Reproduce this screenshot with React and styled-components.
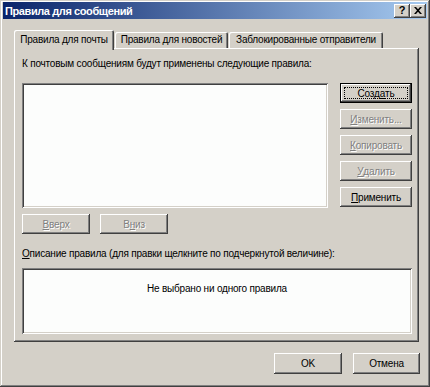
import React from "react";
import styled, { createGlobalStyle, css } from "styled-components";

const Global = createGlobalStyle`
  html, body { margin: 0; padding: 0; background: #d4d0c8; }
  body { font-family: "Liberation Sans", Arial, sans-serif; font-size: 10px; letter-spacing: -0.2px; color: #000; }
  * { box-sizing: border-box; }
`;

const bevelOut = css`
  box-shadow: inset -1px -1px #404040, inset 1px 1px #ffffff, inset -2px -2px #808080, inset 2px 2px #d4d0c8;
`;

const Window = styled.div`
  width: 430px;
  height: 387px;
  background: #d4d0c8;
  padding: 2px;
  display: flex;
  flex-direction: column;
  box-shadow: inset -1px -1px #404040, inset 1px 1px #d4d0c8, inset -2px -2px #808080, inset 2px 2px #ffffff;
`;

const TitleBar = styled.div`
  height: 17px;
  margin: 0 1px;
  display: flex;
  align-items: center;
  padding-left: 2px;
  background: linear-gradient(to right, #0a246a, #a6caf0);
`;

const Title = styled.span`
  flex: 1;
  color: #fff;
  font-weight: bold;
  font-size: 11px;
  letter-spacing: -0.4px;
`;

const TitleButton = styled.div`
  width: 16px;
  height: 14px;
  background: #d4d0c8;
  ${bevelOut};
  display: flex;
  align-items: center;
  justify-content: center;
  margin-right: ${(p) => (p.$last ? "1px" : "0")};
  font-weight: bold;
  font-size: 11px;
  letter-spacing: 0;
  line-height: 1;
  color: #000;
`;

const Body = styled.div`
  flex: 1;
  display: flex;
  flex-direction: column;
  padding: 10px 10px 0 12px;
`;

const TabRow = styled.div`
  display: flex;
  align-items: flex-end;
  height: 19px;
  position: relative;
  z-index: 1;
`;

const Tab = styled.div`
  width: ${(p) => p.$w}px;
  height: ${(p) => (p.$active ? "20px" : "16px")};
  margin-bottom: ${(p) => (p.$active ? "-2px" : "0")};
  padding-top: ${(p) => (p.$active ? "3px" : "1px")};
  margin-left: ${(p) => (p.$active ? "0" : "1px")};
  background: #d4d0c8;
  border-top-left-radius: 2px;
  border-top-right-radius: 2px;
  box-shadow: inset 1px 1px #ffffff, inset -1px 0 #404040, inset -2px 0 #808080;
  white-space: nowrap;
  text-align: center;
  line-height: 13px;
`;

const Panel = styled.div`
  width: 405px;
  height: 294px;
  background: #d4d0c8;
  box-shadow: inset -1px -1px #404040, inset 1px 1px #ffffff, inset -2px -2px #808080;
  padding: 9px 7px 0 8px;
  display: flex;
  flex-direction: column;
`;

const Label = styled.div`
  height: 13px;
  line-height: 13px;
  white-space: nowrap;
`;

const MainRow = styled.div`
  display: flex;
  gap: 12px;
  margin-top: 13px;
`;

const Sunken = styled.div`
  background: #fcfdfc;
  box-shadow: inset 1px 1px #808080, inset -1px -1px #ffffff, inset 2px 2px #404040, inset -2px -2px #d4d0c8;
  width: ${(p) => p.$w}px;
  height: ${(p) => p.$h}px;
  display: flex;
  align-items: flex-start;
  justify-content: center;
`;

const ButtonCol = styled.div`
  display: flex;
  flex-direction: column;
  gap: 6px;
`;

const Button = styled.div`
  width: ${(p) => p.$w || 72}px;
  height: ${(p) => p.$h || 20}px;
  background: #d4d0c8;
  display: flex;
  align-items: center;
  justify-content: center;
  position: relative;
  white-space: nowrap;
  ${bevelOut};
  color: ${(p) => (p.$disabled ? "#808080" : "#000")};
  text-shadow: ${(p) => (p.$disabled ? "1px 1px 0 #ffffff" : "none")};
  ${(p) =>
    p.$default &&
    css`
      box-shadow: inset 0 0 0 1px #000, inset -2px -2px #404040, inset 2px 2px #ffffff, inset -3px -3px #808080;
      &::after {
        content: "";
        position: absolute;
        left: 4px;
        top: 4px;
        right: 4px;
        bottom: 4px;
        border: 1px dotted #000;
      }
    `}
`;

const U = styled.span`
  text-decoration: underline;
  text-underline-offset: 1px;
`;

const MoveRow = styled.div`
  display: flex;
  gap: 10px;
  margin-top: 6px;
`;

const DescLabel = styled(Label)`
  margin-top: 13px;
`;

const DescBox = styled(Sunken)`
  margin-top: 8px;
  padding-top: 15px;
`;

const Footer = styled.div`
  display: flex;
  justify-content: flex-end;
  gap: 11px;
  margin-top: 11px;
  width: 406px;
`;

export default function App() {
  return (
    <>
      <Global />
      <Window>
        <TitleBar>
          <Title>Правила для сообщений</Title>
          <TitleButton>?</TitleButton>
          <TitleButton $last>
            <svg width="8" height="7" viewBox="0 0 8 7">
              <path d="M0 0h2l2 2.3L6 0h2L5 3.5 8 7H6L4 4.7 2 7H0l3-3.5z" fill="#000" />
            </svg>
          </TitleButton>
        </TitleBar>
        <Body>
          <TabRow>
            <Tab $active $w={100}>Правила для почты</Tab>
            <Tab $w={113}>Правила для новостей</Tab>
            <Tab $w={154}>Заблокированные отправители</Tab>
          </TabRow>
          <Panel>
            <Label>К почтовым сообщениям будут применены следующие правила:</Label>
            <MainRow>
              <Sunken $w={307} $h={125} />
              <ButtonCol>
                <Button $default>
                  Созд<U>а</U>ть
                </Button>
                <Button $disabled>
                  <U>И</U>зменить...
                </Button>
                <Button $disabled>
                  <U>К</U>опировать
                </Button>
                <Button $disabled>
                  <U>У</U>далить
                </Button>
                <Button>
                  <U>П</U>рименить
                </Button>
              </ButtonCol>
            </MainRow>
            <MoveRow>
              <Button $w={68} $disabled>
                <U>В</U>верх
              </Button>
              <Button $w={68} $disabled>
                В<U>н</U>из
              </Button>
            </MoveRow>
            <DescLabel>
              <U>О</U>писание правила (для правки щелкните по подчеркнутой величине):
            </DescLabel>
            <DescBox $w={390} $h={66}>
              Не выбрано ни одного правила
            </DescBox>
          </Panel>
          <Footer>
            <Button $w={68} $h={21}>OK</Button>
            <Button $w={67} $h={21}>Отмена</Button>
          </Footer>
        </Body>
      </Window>
    </>
  );
}
